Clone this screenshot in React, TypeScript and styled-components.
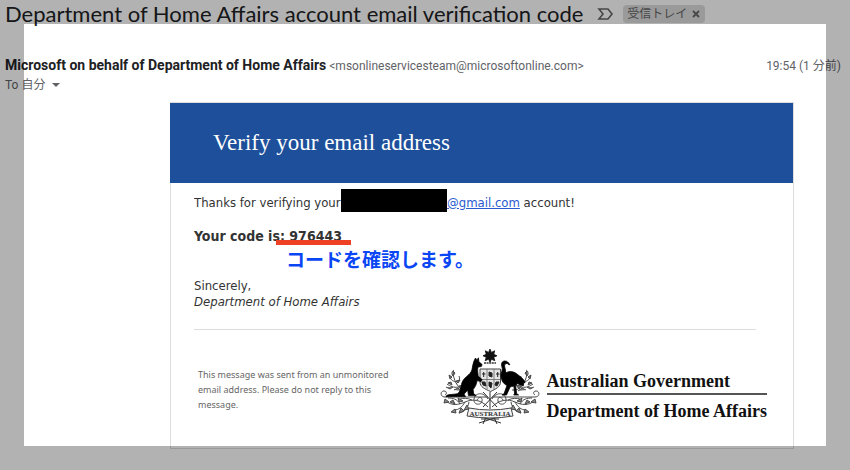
import React from "react";
import styled, { createGlobalStyle } from "styled-components";

const GlobalStyle = createGlobalStyle`
  * { box-sizing: border-box; }
  body { margin: 0; background: #fff; }
  h1, h2, p { margin: 0; font-weight: normal; }
  button { border: 0; padding: 0; background: none; color: inherit; font: inherit; cursor: pointer; }
`;

const ui = `Roboto, "Noto Sans CJK JP", sans-serif`;
const mail = `"DejaVu Sans Condensed", "DejaVu Sans", sans-serif`;

const Page = styled.main`
  min-height: 100vh;
  padding-bottom: 21px;
  font-family: ${ui};
  color: #202124;
`;

const DimFrame = styled.div`
  position: fixed;
  inset: 0;
  border: 24px solid rgba(0, 0, 0, 0.3);
  pointer-events: none;
`;

const SubjectBar = styled.header`
  display: flex;
  align-items: center;
  height: 28px;
  padding: 0 5px;
`;

const Subject = styled.h1`
  font: 22px/28px Lato, sans-serif;
  white-space: nowrap;
`;

const ImportanceButton = styled.button`
  display: flex;
  margin: 0 9px 0 14px;
  color: #666;
`;

const Label = styled.div`
  display: flex;
  align-items: center;
  gap: 4px;
  height: 18px;
  padding: 0 4px;
  border-radius: 4px;
  background: #ddd;
  color: #666;
  font-size: 12px;
  line-height: 18px;
`;

const Meta = styled.div`
  display: flex;
  justify-content: space-between;
  align-items: baseline;
  margin-top: 27px;
  padding: 0 9px 0 5px;
  color: #5f6368;
  font-size: 12px;
  line-height: 20px;
  white-space: nowrap;
`;

const Sender = styled.strong`
  margin-right: 3px;
  color: #202124;
  font-size: 14px;
`;

const Recipient = styled.button`
  display: flex;
  align-items: center;
  gap: 7px;
  margin-left: 5px;
  color: #5f6368;
  font-size: 12px;
  line-height: 18px;
`;

const Card = styled.article`
  margin: 8px 56px 0 170px;
  border: 1px solid #ddd;
  border-left: 0;
  font-family: ${mail};
  font-size: 13px;
  line-height: 16px;
  color: #333;
`;

const Banner = styled.h2`
  padding: 0 43px;
  background: #1d4f9b;
  color: #fff;
  font: 23px/80px "Liberation Serif", serif;
`;

const Body = styled.div`
  padding: 12px 37px 12px 23px;
  border-left: 1px solid #ddd;
`;

const AccountLine = styled.p`
  display: flex;
  align-items: flex-end;
  height: 16px;
  white-space: pre;
`;

const Clipped = styled.span`
  width: 147px;
  overflow: hidden;
`;

const Redaction = styled.span`
  width: 106px;
  height: 23px;
  margin-bottom: -1px;
  background: #000;
`;

const MailLink = styled.a`
  color: #2a5bd0;
`;

const CodeLine = styled.p`
  margin: 17px 0 34px;
  font-size: 14px;
  font-weight: bold;
`;

const Marked = styled.span`
  position: relative;
`;

const Underline = styled.span`
  position: absolute;
  left: -4px;
  right: -9px;
  bottom: -1px;
  height: 5px;
  background: #ee4023;
`;

const Note = styled.span`
  position: absolute;
  left: 6px;
  top: 19px;
  color: #0b46f5;
  font: bold 19px/24px "Noto Sans CJK JP", sans-serif;
  white-space: nowrap;
`;

const Divider = styled.hr`
  margin: 19px 0 0;
  border: 0;
  border-top: 1px solid #ddd;
`;

const Footer = styled.footer`
  display: flex;
  margin-right: -11px;
  padding: 18px 0 10px 4px;
`;

const Disclaimer = styled.p`
  width: 204px;
  margin: 19px 38px 0 0;
  color: #666;
  font: 9px/15px "Noto Sans", sans-serif;
`;

const Brand = styled.div`
  display: flex;
  gap: 5px;
`;

const BrandText = styled.div`
  display: flex;
  flex-direction: column;
  padding-top: 21px;
  color: #111;
  font: bold 18px/24px "Liberation Serif", serif;
  white-space: nowrap;
`;

const BrandLine = styled.span<{ $ruled?: boolean }>`
  ${(p) => p.$ruled && "border-bottom: 2px solid #555; margin-bottom: 4px;"}
`;

const Crest = styled.svg`
  flex: none;
  display: block;
`;

function Sprig() {
  return (
    <g fill="none" stroke="#4a4a4a" strokeWidth="1">
      <path d="M30 42C22 43 17 36 15 26M18 34c-4-1-6-3-6-6M18 36c4-3 4-5 3-8M21 39c-6 1-9-1-12-3M15 28c-2-2-1-5 1-6" />
      <path d="M14 29l-3-2 1 4zM18 33l4-1-2 3zM13 34l-3 1 4 2zM21 38l5-1-3 4zM8 39l4 2 3-2M16 42l4-2 4 3M15 23l2 2-2 3z" fill="#777" />
      <path d="M50 59C42 51 34 51 27 54S14 58 8 53M27 54c-3 5-6 8-11 8M22 56c-3-5-7-6-12-6M34 52c-4-2-9-2-12-1M31 54c-1 6-5 10-10 11" />
      <path d="M11 54l-4-3-1 4zM17 56l-2-4-3 2zM17 61l-4 3 5 1zM23 60l-2 5 5-2zM25 53l-5-3 1 4zM29 57l-3 5 5-1z" fill="#888" />
      <path d="M50 49H7C2 49 2 43 6 43c3 0 3 3 1 4M50 51C45 43 37 45 36 51s7 7 8 2-4-4-5-1" />
    </g>
  );
}

function CoatOfArms() {
  return (
    <Crest width="104" height="78" viewBox="0 0 104 78" role="img" aria-label="Coat of arms">
      <Sprig />
      <g transform="matrix(-1 0 0 1 104 0)"><Sprig /></g>
      <path d="M52 1l1.4 3.4 3.3-1.6-.9 3.5 3.2 1.5-3.2 1.4 1 3.5-3.4-1.5L52 14.4l-1.4-3.2-3.4 1.5 1-3.5L45 7.800l3.2-1.5-.9-3.5 3.3 1.6z" fill="#111" stroke="#111" strokeWidth=".8" />
      <path d="M46 15h12" stroke="#333" strokeWidth="1.5" strokeDasharray="2 .6" />
      <path d="M42 21h20.500V34c0 5-5 7-10 9.500C47 41 42 39 42 34z" fill="#e4e4e4" stroke="#444" />
      <path d="M42 31.500h20.500M49 21v20M56 21v20" stroke="#666" strokeWidth=".8" />
      <path d="M44 26h3.500M45.700 24v5M51 24l3 1v4l-3-1zM58 26h3.500M59.700 24v5M44 34h3l1 4-3-1zM51 34l3 1-1 5-2-2zM58 34l3 0-2 4-2-1z" fill="#222" stroke="#222" />
      <path d="M37.500 10l1.500 2.500 1.400-2.700.5 4 3.200 2.700-.8 2-3.300.6c-1 3 .2 6 .1 9l4 3.500-1 2-4-1c-.4 4-2.500 7-4 9l.5 4 2.500 2H30.500l-.8-5.500-3.700 4 1.500 2.500H8c0-2 4-2 10-2.600 4-.4 4.500-5 5.500-9.500 1.500-8 9-8.500 10.500-15 .6-3 1-6 2-8.500z" fill="#000" stroke="#000" strokeWidth=".8" />
      <path d="M71 17c-.6-1.700-3-2.200-4-.7-1.600 2 1.200 5 .6 8.700 4-2.500 8.500-1.500 12 1.500 3 2.500 6 4 7.500 8l-2 .5.5 2.500c-3 0-4.500-1-6-2l-2 2 1 8 2 1.500h-5l1-1-.7-8c-2 1-3 0-4 1.500L68.500 47H64l2-1.200 3-8.300c-4-2-5.500-5-6-9-.5-4 2.500-7 .8-10-1-2.500.2-5.500 3-5.500 2.600 0 3.400 1.500 5 3.500z" fill="#000" stroke="#000" strokeWidth=".8" />
      <path d="M52 44v17M45 44l14 15M59 44L45 59M41 75l22-7M41 68l22 7M43 71h18M49 67l-4 9M55 67l4 9" fill="none" stroke="#333" />
      <path d="M31 60q21 4 42 0l2 8q-23 4-46 0z" fill="#f4f4f4" stroke="#444" strokeWidth="1" />
      <text x="52" y="68" textAnchor="middle" fontFamily="Liberation Serif, serif" fontSize="7" fontWeight="bold" fill="#333">AUSTRALIA</text>
    </Crest>
  );
}

export default function App() {
  return (
    <>
      <GlobalStyle />
      <Page>
        <SubjectBar>
          <Subject>Department of Home Affairs account email verification code</Subject>
          <ImportanceButton aria-label="Importance">
            <svg width="17" height="14" viewBox="0 0 17 14" fill="none" stroke="currentColor" strokeWidth="1.6">
              <path d="M2 2h9l4 5-4 5H2l4-5z" />
            </svg>
          </ImportanceButton>
          <Label>
            受信トレイ
            <button aria-label="Remove label">
              <svg width="10" height="8" viewBox="0 0 10 8" stroke="currentColor" strokeWidth="1.8">
                <path d="M2 1l6 6M8 1L2 7" />
              </svg>
            </button>
          </Label>
        </SubjectBar>
        <Meta>
          <span>
            <Sender>Microsoft on behalf of Department of Home Affairs</Sender>
            &lt;msonlineservicesteam@microsoftonline.com&gt;
          </span>
          <time>19:54 (1 分前)</time>
        </Meta>
        <Recipient>
          To 自分
          <svg width="8" height="4" viewBox="0 0 8 4" fill="currentColor"><path d="M0 0h8L4 4z" /></svg>
        </Recipient>
        <Card>
          <Banner>Verify your email address</Banner>
          <Body>
            <AccountLine>
              <Clipped>Thanks for verifying your</Clipped>
              <Redaction />
              <MailLink href="mailto:@gmail.com">@gmail.com</MailLink> account!
            </AccountLine>
            <CodeLine>
              Your code is
              <Marked>
                : 976443
                <Underline />
                <Note>コードを確認します。</Note>
              </Marked>
            </CodeLine>
            <p>Sincerely,</p>
            <p><em>Department of Home Affairs</em></p>
            <Divider />
            <Footer>
              <Disclaimer>
                This message was sent from an unmonitored email address. Please do not reply to this message.
              </Disclaimer>
              <Brand>
                <CoatOfArms />
                <BrandText>
                  <BrandLine $ruled>Australian Government</BrandLine>
                  <BrandLine>Department of Home Affairs</BrandLine>
                </BrandText>
              </Brand>
            </Footer>
          </Body>
        </Card>
      </Page>
      <DimFrame />
    </>
  );
}
